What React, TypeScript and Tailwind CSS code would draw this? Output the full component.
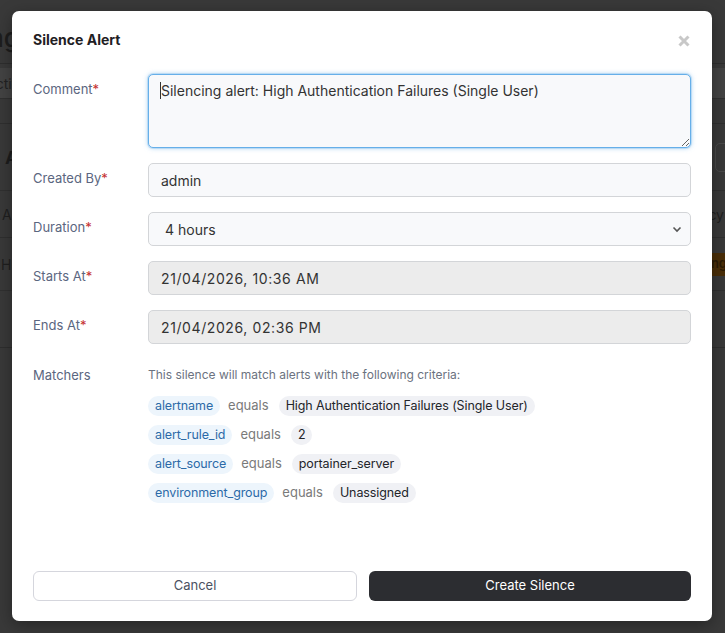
import React from "react";

const Label = ({ text }: { text: string }) => (
  <div className="pt-[6px] text-[13px] leading-[18px] text-[#5b6680]">
    {text}
    <span className="text-[#c53030]">*</span>
  </div>
);

const matchers = [
  { k: "alertname", v: "High Authentication Failures (Single User)" },
  { k: "alert_rule_id", v: "2" },
  { k: "alert_source", v: "portainer_server" },
  { k: "environment_group", v: "Unassigned" },
];

export default function App() {
  return (
    <div className="relative h-[633px] w-full overflow-hidden bg-[#393939] font-[Inter,sans-serif]">
      {/* background page (dimmed) */}
      <div className="flex flex-col text-[#1c1c1c]">
        <div className="flex h-[64px] items-start border-b border-[#2e2e2e] pt-[22px]">
          <span className="ml-[-78px] text-[26px] font-medium leading-[32px] text-[#1d1d1d]">Alerting</span>
        </div>
        <div className="flex h-[35px] items-end border-b border-[#303030]">
          <div className="flex h-[30px] w-full items-center bg-[#434343]">
            <span className="ml-[-14px] text-[14px] text-[#222]">Active</span>
          </div>
        </div>
        <div className="h-[25px] border-b border-[#2f2f2f]" />
        <div className="flex h-[67px] items-center justify-between border-b border-[#303030]">
          <span className="ml-[5px] text-[18px] font-bold text-[#1d1d1d]">Alerts</span>
          <div className="mr-[-30px] h-[29px] w-[40px] rounded-[5px] border border-[#4a4a4a]" />
        </div>
        <div className="flex h-[47px] items-center justify-between border-b border-[#2f2f2f]">
          <span className="ml-[2px] text-[14px] text-[#1f1f1f]">Alert</span>
          <span className="mr-[1px] text-[14px] text-[#1f1f1f]">Urgency</span>
        </div>
        <div className="flex h-[53px] items-center justify-between border-b border-[#303030]">
          <span className="ml-[1px] text-[14px] text-[#1f1f1f]">High</span>
          <span className="mr-[-10px] flex h-[23px] items-center bg-[#4a2e08] px-2 text-[13px] font-semibold text-[#2a1a04]">Warning</span>
        </div>
        <div className="h-[57px] border-b border-[#2e2e2e]" />
      </div>

      {/* modal */}
      <div className="absolute left-[12px] top-[11px] flex h-[610px] w-[700px] flex-col rounded-[7px] bg-white px-[21px] shadow-[0_4px_16px_rgba(0,0,0,0.35)]">
        <div className="relative pt-[19px]">
          <h2 className="text-[14px] font-bold leading-[20px] text-[#1f2023]">Silence Alert</h2>
          <svg
            className="absolute right-[1px] top-[24px]"
            width="12"
            height="12"
            viewBox="0 0 12 12"
          >
            <path d="M1.5 1.5 L10.5 10.5 M10.5 1.5 L1.5 10.5" stroke="#c8c8c8" strokeWidth="3" strokeLinecap="butt" />
          </svg>
        </div>

        <div className="mt-[24px] flex flex-col gap-[15px]">
          <div className="grid grid-cols-[115px_1fr]">
            <Label text="Comment" />
            <div className="relative">
              <textarea
                readOnly
                defaultValue="Silencing alert: High Authentication Failures (Single User)"
                className="block h-[74px] w-full resize-y rounded-[5px] border border-[#66afe9] bg-[#f8f9fb] px-[12px] pt-[6px] text-[14px] leading-[20px] text-[#333] shadow-[0_0_0_1px_rgba(102,175,233,0.25),0_0_5px_rgba(102,175,233,0.6)] outline-none"
              />
              <span className="absolute left-[12px] top-[8px] h-[17px] w-px bg-[#333]" />
            </div>
          </div>

          <div className="grid grid-cols-[115px_1fr]">
            <Label text="Created By" />
            <div className="flex h-[34px] items-center rounded-[5px] border border-[#d3d5d8] bg-[#f8f9fb] px-[12px] text-[14px] text-[#333]">
              admin
            </div>
          </div>

          <div className="grid grid-cols-[115px_1fr]">
            <Label text="Duration" />
            <div className="relative flex h-[34px] items-center rounded-[5px] border border-[#d3d5d8] bg-[#f8f9fb] pl-[16px] text-[14px] text-[#333]">
              4 hours
              <svg className="absolute right-[8px] top-[13px]" width="10" height="7" viewBox="0 0 10 7">
                <path d="M1.5 1.5 L5 5 L8.5 1.5" fill="none" stroke="#555" strokeWidth="1.6" />
              </svg>
            </div>
          </div>

          <div className="grid grid-cols-[115px_1fr]">
            <Label text="Starts At" />
            <div className="flex h-[34px] items-center rounded-[5px] border border-[#d3d5d8] bg-[#ececec] px-[12px] text-[14px] tracking-[0.6px] text-[#333]">
              21/04/2026, 10:36&nbsp;AM
            </div>
          </div>

          <div className="grid grid-cols-[115px_1fr]">
            <Label text="Ends At" />
            <div className="flex h-[34px] items-center rounded-[5px] border border-[#d3d5d8] bg-[#ececec] px-[12px] text-[14px] tracking-[0.6px] text-[#333]">
              21/04/2026, 02:36&nbsp;PM
            </div>
          </div>
        </div>

        <div className="mt-[16px] grid grid-cols-[115px_1fr]">
          <div className="pt-[6px] text-[13px] leading-[18px] text-[#5b6680]">Matchers</div>
          <div className="pt-[6px]">
            <p className="text-[12px] leading-[18px] text-[#6b7280]">
              This silence will match alerts with the following criteria:
            </p>
            <div className="mt-[12px] flex flex-col gap-[9px]">
              {matchers.map((m) => (
                <div key={m.k} className="flex items-center gap-[8px]">
                  <span className="flex h-[20px] items-center rounded-full bg-[#edf5fc] px-[7px] text-[12.5px] tracking-[-0.1px] text-[#2c6aa8]">
                    {m.k}
                  </span>
                  <span className="text-[13px] text-[#7a7a7a]">equals</span>
                  <span className="ml-[2px] flex h-[20px] items-center rounded-full bg-[#f0f1f5] px-[7px] text-[12.5px] tracking-[-0.1px] text-[#23252a]">
                    {m.v}
                  </span>
                </div>
              ))}
            </div>
          </div>
        </div>

        <div className="mt-auto mb-[20px] flex gap-[12px]">
          <button className="flex h-[30px] flex-1 items-center justify-center rounded-[6px] border border-[#d5d6dd] bg-white text-[13px] text-[#4b5262]">
            Cancel
          </button>
          <button className="flex h-[30px] flex-1 items-center justify-center rounded-[6px] bg-[#2c2d31] text-[13px] text-white">
            Create Silence
          </button>
        </div>
      </div>
    </div>
  );
}
